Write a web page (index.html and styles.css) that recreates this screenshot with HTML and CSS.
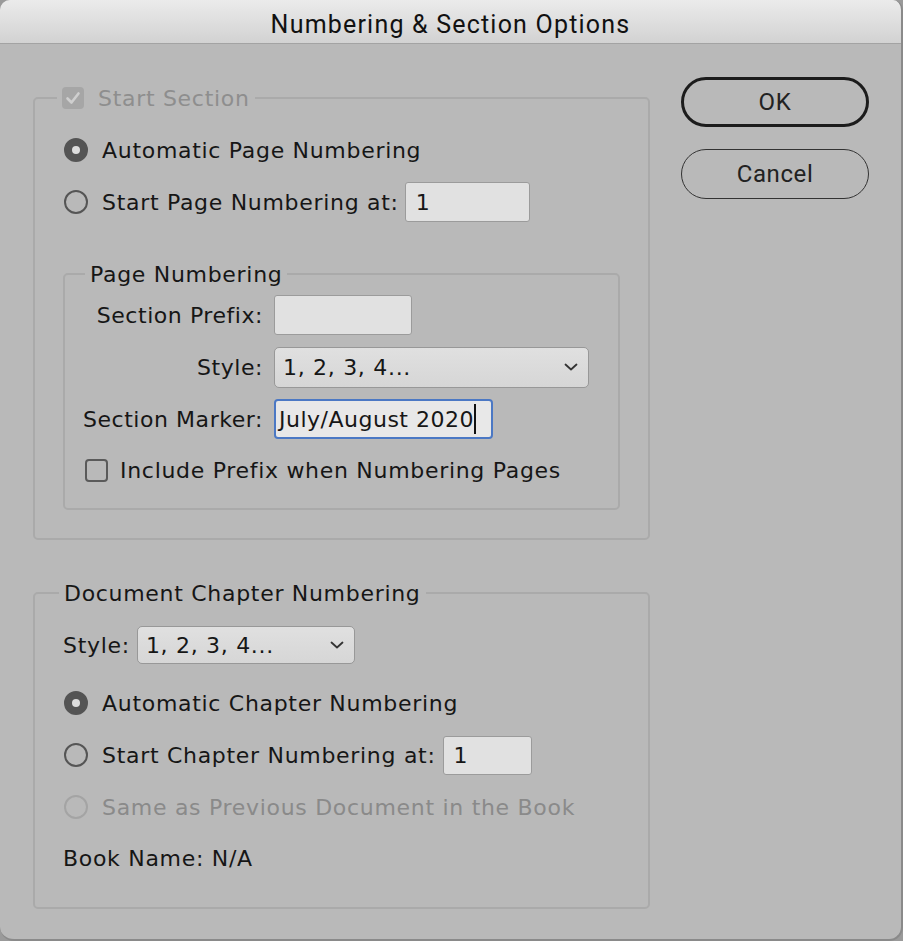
FILE: index.html
```html
<!DOCTYPE html>
<html lang="en">
<head>
    <meta charset="UTF-8">
    <title>Numbering &amp; Section Options</title>
    <link rel="stylesheet" href="styles.css">
</head>
<body>
    <div class="window">
        <div class="titlebar">Numbering &amp; Section Options</div>

        <div class="content">
            <div class="groups">
                <!-- Start Section (disabled, checked) -->
                <fieldset class="group section-group">
                    <legend class="legend disabled">
                        <span class="check checked is-disabled">
                            <svg viewBox="0 0 22 22" width="22" height="22"><path d="M5.5 11.5 L9.5 15.5 L16.5 6.5" fill="none" stroke="#cfcfcf" stroke-width="2.6" stroke-linecap="round" stroke-linejoin="round"/></svg>
                        </span>
                        Start Section
                    </legend>

                    <div class="radio-row first"><span class="radio on"></span>Automatic Page Numbering</div>
                    <div class="radio-row"><span class="radio"></span>Start Page Numbering at:<span class="field page-start">1</span></div>

                    <fieldset class="group sub-group">
                        <legend class="legend">Page Numbering</legend>
                        <div class="form-row first"><span class="form-label">Section Prefix:</span><span class="field prefix"></span></div>
                        <div class="form-row">
                            <span class="form-label">Style:</span>
                            <span class="select wide">1, 2, 3, 4...
                                <svg class="chevron" viewBox="0 0 14 8" width="14" height="8"><path d="M1.5 1.5 L7 6.5 L12.5 1.5" fill="none" stroke="#333" stroke-width="1.8" stroke-linecap="round" stroke-linejoin="round"/></svg>
                            </span>
                        </div>
                        <div class="form-row"><span class="form-label">Section Marker:</span><span class="field marker focused">July/August 2020<span class="caret"></span></span></div>
                        <div class="check-row"><span class="check"></span>Include Prefix when Numbering Pages</div>
                    </fieldset>
                </fieldset>

                <!-- Document Chapter Numbering -->
                <fieldset class="group chapter-group">
                    <legend class="legend">Document Chapter Numbering</legend>
                    <div class="style-row">
                        Style:
                        <span class="select narrow">1, 2, 3, 4...
                            <svg class="chevron" viewBox="0 0 14 8" width="14" height="8"><path d="M1.5 1.5 L7 6.5 L12.5 1.5" fill="none" stroke="#333" stroke-width="1.8" stroke-linecap="round" stroke-linejoin="round"/></svg>
                        </span>
                    </div>
                    <div class="radio-row first"><span class="radio on"></span>Automatic Chapter Numbering</div>
                    <div class="radio-row"><span class="radio"></span>Start Chapter Numbering at:<span class="field chapter-start">1</span></div>
                    <div class="radio-row disabled"><span class="radio is-disabled"></span>Same as Previous Document in the Book</div>
                    <div class="book-name">Book Name: N/A</div>
                </fieldset>
            </div>

            <div class="buttons">
                <div class="button default">OK</div>
                <div class="button">Cancel</div>
            </div>
        </div>
    </div>
</body>
</html>
```

FILE: styles.css
```css
html, body {
    margin: 0;
    padding: 0;
    background: #9a9a9a;
}

body {
    font-family: "DejaVu Sans", "Liberation Sans", sans-serif;
    font-size: 22px;
    letter-spacing: 0.7px;
    color: #161616;
}

.window {
    width: 901px;
    height: 939px;
    background: #b9b9b9;
    border-right: 2px solid #8a8a8a;
    border-bottom: 2px solid #8a8a8a;
    border-radius: 10px 10px 14px 14px;
    overflow: hidden;
}

.titlebar {
    height: 43px;
    line-height: 49px;
    text-align: center;
    font-family: Roboto, "Liberation Sans", sans-serif;
    font-size: 25px;
    letter-spacing: 1.2px;
    color: #111;
    background: linear-gradient(#ebebeb, #d2d2d2);
    border-bottom: 1px solid #a3a3a3;
}

.content {
    display: flex;
    align-items: flex-start;
    padding: 33px 0 0 33px;
}

.groups {
    width: 617px;
    margin-top: 6px;
    display: flex;
    flex-direction: column;
    gap: 38px;
}

/* group boxes */
.group {
    margin: 0;
    padding: 0 0 0 28px;
    border: 2px solid #aaaaaa;
    border-radius: 5px;
    min-inline-size: 0;
}

.legend {
    display: flex;
    align-items: center;
    height: 30px;
    padding: 0 5px;
    margin-left: -4px;
    white-space: nowrap;
}

.legend.disabled {
    color: #8e8e8e;
    gap: 14px;
    margin-left: -6px;
}

.section-group {
    padding-bottom: 28px;
}

.sub-group {
    width: 553px;
    margin: 37px 0 0 0;
    padding: 0 0 18px 0;
}

.sub-group .legend {
    margin-left: 20px;
}

.chapter-group {
    padding-bottom: 28px;
}

/* radios */
.radio-row {
    display: flex;
    align-items: center;
    height: 40px;
    margin-top: 12px;
    white-space: nowrap;
}

.radio-row.first {
    margin-top: 17px;
}

.chapter-group .radio-row.first {
    margin-top: 19px;
}

.radio-row.disabled {
    color: #8a8a8a;
}

.radio {
    box-sizing: border-box;
    width: 24px;
    height: 24px;
    margin: 0 14px 0 1px;
    border-radius: 50%;
    border: 2px solid #555;
    flex: none;
}

.radio.on {
    background: #545454;
    border-color: #545454;
    position: relative;
}

.radio.on::after {
    content: "";
    position: absolute;
    left: 6px;
    top: 6px;
    width: 8px;
    height: 8px;
    border-radius: 50%;
    background: #dcdcdc;
}

.radio.is-disabled {
    border-color: #a4a4a4;
}

/* checkboxes */
.check {
    box-sizing: border-box;
    display: inline-block;
    width: 23px;
    height: 23px;
    border: 2px solid #5a5a5a;
    border-radius: 4px;
    flex: none;
}

.check.checked {
    width: 22px;
    height: 22px;
    border: none;
    background: #a6a6a6;
}

.check svg {
    display: block;
}

.check-row {
    display: flex;
    align-items: center;
    gap: 12px;
    height: 40px;
    margin: 11px 0 0 20px;
    white-space: nowrap;
}

/* fields */
.field {
    box-sizing: border-box;
    display: inline-flex;
    align-items: center;
    height: 40px;
    margin-left: 6px;
    padding: 0 10px;
    background: #e1e1e1;
    border: 1px solid #9b9b9b;
    border-radius: 3px;
    white-space: nowrap;
}

.page-start {
    width: 125px;
}

.chapter-start {
    width: 89px;
    height: 39px;
    margin-left: 7px;
}

.prefix {
    width: 138px;
}

.marker {
    width: 219px;
    padding: 0 3px;
    letter-spacing: 0.5px;
}

.field.focused {
    background: #e8e8e8;
    border: 2px solid #4b78c4;
    border-radius: 4px;
}

.caret {
    width: 2px;
    height: 30px;
    margin-left: 0;
    background: #111;
}

.select {
    box-sizing: border-box;
    display: inline-flex;
    align-items: center;
    justify-content: space-between;
    height: 41px;
    padding: 0 10px 0 8px;
    background: linear-gradient(#e0e0e0, #d6d6d6);
    border: 1px solid #989898;
    border-radius: 5px;
    white-space: nowrap;
}

.select.wide {
    width: 315px;
}

.select.narrow {
    width: 218px;
    height: 38px;
    margin-left: 7px;
}

/* label/field rows */
.form-row {
    display: flex;
    align-items: center;
    gap: 12px;
    height: 40px;
    margin-top: 12px;
}

.form-row.first {
    margin-top: 6px;
}

.form-row .field {
    margin-left: 0;
}

.form-label {
    width: 198px;
    margin-right: -1px;
    text-align: right;
    letter-spacing: 0.55px;
    white-space: nowrap;
}

.style-row {
    display: flex;
    align-items: center;
    height: 38px;
    margin-top: 18px;
}

.book-name {
    height: 40px;
    line-height: 40px;
    margin-top: 12px;
}

/* buttons */
.buttons {
    width: 188px;
    margin-left: 31px;
    display: flex;
    flex-direction: column;
    gap: 22px;
}

.button {
    box-sizing: border-box;
    height: 50px;
    line-height: 48px;
    text-align: center;
    font-family: Roboto, "Liberation Sans", sans-serif;
    font-size: 24px;
    letter-spacing: 0.6px;
    color: #222;
    border: 1.5px solid #333;
    border-radius: 25px;
}

.button.default {
    border: 3px solid #1c1c1c;
    line-height: 45px;
}
```
